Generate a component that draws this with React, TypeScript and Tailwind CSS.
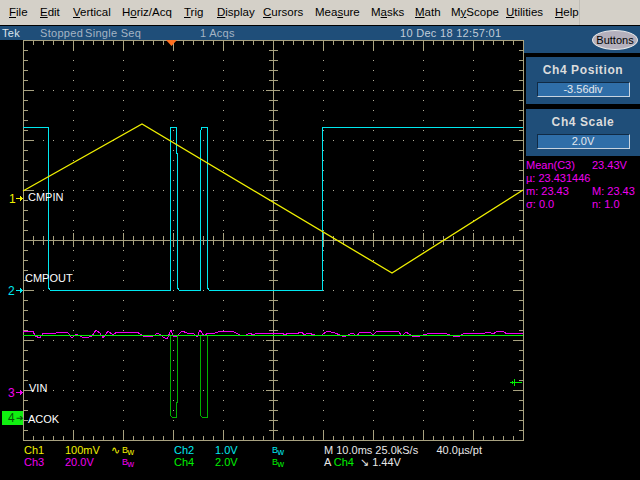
import React from "react";

const axis = "#a8a280";

const menu = [
  { pre: "", u: "F", post: "ile", w: "w-[31px]" },
  { pre: "", u: "E", post: "dit", w: "w-[33px]" },
  { pre: "", u: "V", post: "ertical", w: "w-[49px]" },
  { pre: "H", u: "o", post: "riz/Acq", w: "w-[62px]" },
  { pre: "", u: "T", post: "rig", w: "w-[33px]" },
  { pre: "", u: "D", post: "isplay", w: "w-[46px]" },
  { pre: "", u: "C", post: "ursors", w: "w-[52px]" },
  { pre: "Mea", u: "s", post: "ure", w: "w-[56px]" },
  { pre: "M", u: "a", post: "sks", w: "w-[44px]" },
  { pre: "", u: "M", post: "ath", w: "w-[36px]" },
  { pre: "M", u: "y", post: "Scope", w: "w-[55px]" },
  { pre: "", u: "U", post: "tilities", w: "w-[49px]" },
  { pre: "", u: "H", post: "elp", w: "w-[27px]" },
];

// magenta noise, read off the screen: [x, y]
const noise: number[][] = [
  [23, 332], [33, 331], [35, 336], [40, 338], [43, 333], [50, 334], [62, 332], [68, 333], [72, 338], [76, 334], [82, 337], [86, 338],
  [92, 336], [96, 330], [100, 333], [103, 338], [108, 331], [113, 335], [117, 332], [137, 332], [143, 336], [153, 336], [158, 333],
  [163, 337], [167, 339], [171, 330], [173, 336], [177, 336], [182, 331], [187, 333], [193, 333], [197, 337], [200, 330], [204, 336],
  [208, 333], [213, 334], [220, 331], [227, 332], [232, 331], [240, 335], [245, 336], [250, 333], [253, 335], [257, 333], [265, 333],
  [270, 334], [282, 333], [285, 335], [288, 333], [295, 334], [302, 332], [304, 335], [308, 333], [315, 335], [322, 335], [327, 331],
  [335, 333], [340, 335], [344, 337], [352, 333], [357, 336], [360, 332], [370, 332], [373, 335], [377, 331], [398, 331], [402, 336],
  [406, 332], [412, 336], [420, 336], [427, 334], [437, 333], [447, 334], [453, 336], [460, 336], [465, 333], [485, 333], [489, 332],
  [493, 334], [498, 331], [503, 331], [507, 334], [513, 333], [523, 333],
];

const pts = (list: number[][]) => list.map((p) => p.join(",")).join(" ");

const range = (from: number, to: number, step: number) => {
  const out: number[] = [];
  for (let v = from; v <= to; v += step) out.push(v);
  return out;
};

function Graticule() {
  let d = "";
  let dots = "";
  // dotted grid
  for (const x of range(73, 473, 50)) {
    for (const y of range(50, 430, 10)) dots += `M${x} ${y}h1v1h-1z`;
  }
  for (const y of range(90, 390, 50)) {
    for (const x of range(33, 513, 10)) dots += `M${x} ${y}h1v1h-1z`;
  }
  // border
  d += "M23.5 40.5H523.5V440.5H23.5Z";
  // center cross
  d += "M23 240.5H523M273.5 40V440";
  for (const x of range(33, 513, 10)) {
    const major = (x - 23) % 50 === 0;
    const len = major ? 10 : 4;
    d += `M${x + 0.5} 41v${len}M${x + 0.5} 440v-${len}`;
    d += major ? `M${x + 0.5} 233v14` : `M${x + 0.5} 236v9`;
  }
  for (const y of range(50, 430, 10)) {
    const major = (y - 40) % 50 === 0;
    const len = major ? 10 : 4;
    d += `M24 ${y + 0.5}h${len}M523 ${y + 0.5}h-${len}`;
    d += major ? `M266 ${y + 0.5}h14` : `M269 ${y + 0.5}h9`;
  }
  return (
    <g shapeRendering="crispEdges">
      <path d={dots} fill="#b0ac98" />
      <path d={d} stroke={axis} fill="none" />
    </g>
  );
}

function Scope() {
  return (
    <svg width="524" height="401" viewBox="0 40 524 401" className="block">
      <Graticule />
      <path d="M166 40h11l-5.500 6z" fill="#ff7020" />
      <polyline
        fill="none"
        stroke="#00e8f0"
        shapeRendering="crispEdges"
        points={pts([
          [23, 127], [48, 127], [48, 287], [50, 290], [170, 290], [170, 133], [171, 127], [176, 127], [176, 153], [177, 153], [177, 287], [179, 290],
          [200, 290], [200, 133], [202, 127], [207, 127], [207, 287], [209, 290], [322, 290], [322, 127], [523, 127],
        ])}
      />
      <polyline
        fill="none"
        stroke="#00b000"
        shapeRendering="crispEdges"
        points={pts([
          [170, 335], [170, 415], [172, 417], [176, 417], [176, 402], [177, 402], [177, 335], [200, 335], [200, 415], [202, 417], [207, 417], [207, 335],
        ])}
      />
      <polyline fill="none" stroke="#f000f0" shapeRendering="crispEdges" points={pts(noise)} />
      <path d="M23 335.500H523" stroke="#00f000" shapeRendering="crispEdges" />
      <polyline
        fill="none"
        stroke="#f0f000"
        strokeWidth="1.300"
        points={pts([[23, 191], [142, 124], [392, 273], [523, 190]])}
      />
      {/* channel pointers */}
      <g fill="none" strokeWidth="1" shapeRendering="crispEdges">
        <path d="M16 198.500h7M20 196.500l2 2-2 2" stroke="#f0f000" />
        <path d="M16 290.500h7M20 288.500l2 2-2 2" stroke="#00e8f0" />
        <path d="M16 392.500h7M20 390.500l2 2-2 2" stroke="#f000f0" />
        <path d="M510 382.500h12M514 379v7M512 381v3" stroke="#00f000" />
      </g>
    </svg>
  );
}

function Label({ className, children }: { className: string; children: React.ReactNode }) {
  return <div className={`absolute leading-[12px] ${className}`}>{children}</div>;
}

function SidePanel({ title, value }: { title: string; value: string }) {
  return (
    <div className="h-[47px] bg-[#1f4e79] pt-[6px] flex flex-col items-center">
      <div className="h-[18px] leading-[14px] text-[12px] font-bold tracking-[0.6px] text-[#dcdcdc]">{title}</div>
      <div className="mt-[1px] w-[93px] h-[15px] bg-[#2f6ea8] border border-t-[#102a44] border-l-[#102a44] border-r-[#c8d4e0] border-b-[#c8d4e0] text-center leading-[13px] text-[11px] text-[#e4e8ec]">
        {value}
      </div>
    </div>
  );
}

const Bw = ({ className }: { className: string }) => (
  <span className={`text-[9px] leading-[12px] tracking-[-0.5px] ${className}`}>
    B<span className="relative top-[2px]">w</span>
  </span>
);

export default function App() {
  return (
    <div className="w-[640px] h-[480px] overflow-hidden bg-black flex flex-col font-['Liberation_Sans',Arial,sans-serif]">
      <div className="h-[25px] bg-[#d4d0c8] flex items-center pl-[9px] text-[11.500px] text-black">
        {menu.map((m) => (
          <div key={m.pre + m.u + m.post} className={`${m.w} shrink-0`}>
            {m.pre}
            <span className="underline">{m.u}</span>
            {m.post}
          </div>
        ))}
        <div className="ml-[-3px] w-[1px] h-[25px] bg-[#c0bdb6]" />
      </div>
      <div className="h-[1px] bg-black" />
      <div className="flex h-[414px]">
        <div className="w-[524px] shrink-0">
          <div className="h-[14px] bg-[#1f4e79] flex items-center pl-[2px] text-[11px] tracking-[0.3px] text-[#a4b4c4]">
            <span className="w-[38px] text-[#dce4ec]">Tek</span>
            <span className="w-[45px]">Stopped</span>
            <span className="w-[115px]">Single Seq</span>
            <span className="w-[200px]">1 Acqs</span>
            <span className="text-[#c0ccd8]">10 Dec 18 12:57:01</span>
          </div>
          <div className="relative">
            <Scope />
            <Label className="left-[9px] top-[153px] text-[#f0f000] text-[12px]">1</Label>
            <Label className="left-[28px] top-[151px] text-white text-[11px]">CMPIN</Label>
            <Label className="left-[25px] top-[232px] text-white text-[11px]">CMPOUT</Label>
            <Label className="left-[8px] top-[245px] text-[#00e8f0] text-[12px]">2</Label>
            <Label className="left-[8px] top-[347px] text-[#f000f0] text-[12px]">3</Label>
            <Label className="left-[29px] top-[342px] text-white text-[11px]">VIN</Label>
            <div className="absolute left-[2px] top-[371px] w-[21px] h-[14px] bg-[#10f010] flex items-center pl-[6px] text-[12px] text-[#085008]">
              <span>4</span>
              <span className="ml-[1px] text-[9px] leading-[12px]">➔</span>
            </div>
            <Label className="left-[28px] top-[373px] text-white text-[11px]">ACOK</Label>
          </div>
        </div>
        <div className="flex-1 flex flex-col">
          <div className="h-[27px] bg-[#1f4e79] flex justify-end items-start pt-[4px] pr-[2px]">
            <div className="w-[46px] h-[20px] rounded-[50%] bg-[#b4b0bc] border border-[#e8e8e8] text-center leading-[18px] text-[11px] text-black">
              Buttons
            </div>
          </div>
          <div className="ml-[2px] mt-[4px] flex flex-col gap-[5px]">
            <SidePanel title="Ch4 Position" value="-3.56div" />
            <SidePanel title="Ch4 Scale" value="2.0V" />
          </div>
          <div className="ml-[2px] mt-[3px] grid grid-cols-[66px_48px] leading-[13px] text-[11px] text-[#f000f0]">
            <span>Mean(C3)</span>
            <span>23.43V</span>
            <span className="col-span-2">µ: 23.431446</span>
            <span>m: 23.43</span>
            <span>M: 23.43</span>
            <span>σ: 0.0</span>
            <span>n: 1.0</span>
          </div>
        </div>
      </div>
      <div className="pl-[24px] pt-[4px] grid grid-cols-[41px_46px_11px_52px_41px_57px_52px_auto] leading-[12px] text-[11px] auto-rows-[12px]">
        <span className="text-[#f0f000]">Ch1</span>
        <span className="text-[#f0f000]">100mV</span>
        <span className="text-[#f0f000]">∿</span>
        <Bw className="text-[#f0f000]" />
        <span className="text-[#00e8f0]">Ch2</span>
        <span className="text-[#00e8f0]">1.0V</span>
        <Bw className="text-[#00e8f0]" />
        <span className="text-[#e8e8e8] whitespace-pre">M 10.0ms 25.0kS/s      40.0µs/pt</span>
        <span className="text-[#f000f0]">Ch3</span>
        <span className="text-[#f000f0]">20.0V</span>
        <span />
        <Bw className="text-[#f000f0]" />
        <span className="text-[#00f000]">Ch4</span>
        <span className="text-[#00f000]">2.0V</span>
        <Bw className="text-[#00f000]" />
        <span className="text-[#e8e8e8] whitespace-pre">
          A <span className="text-[#00f000]">Ch4</span>  ↘ 1.44V
        </span>
      </div>
    </div>
  );
}
